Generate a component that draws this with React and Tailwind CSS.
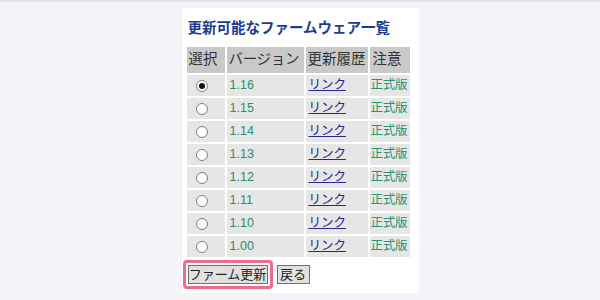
import React from 'react'

const versions = ['1.16', '1.15', '1.14', '1.13', '1.12', '1.11', '1.10', '1.00']

function Radio({ checked }) {
  return (
    <span className="flex w-[12px] h-[12px] rounded-full border border-[#808080] bg-white items-center justify-center">
      {checked && <span className="w-[6px] h-[6px] rounded-full bg-[#111]" />}
    </span>
  )
}

export default function App() {
  return (
    <div
      className="w-[600px] h-[300px] bg-[#f2f4f8] border-t-2 border-[#e3e6ec] overflow-hidden"
      style={{ fontFamily: '"Liberation Sans", "Noto Sans CJK JP", sans-serif' }}
    >
      <div className="mx-auto mt-[6px] w-[237px] h-[285px] bg-white pt-[10px]">
        <h1 className="h-[20px] leading-[20px] pl-[6px] text-[14.5px] font-bold text-[#1d3d8f]">
          更新可能なファームウェア一覧
        </h1>

        <table className="mt-[7px] ml-[3px] w-[227px] border-separate border-spacing-[2px] table-fixed text-[12.5px]">
          <colgroup>
            <col className="w-[38px]" />
            <col className="w-[77px]" />
            <col className="w-[62px]" />
            <col className="w-[40px]" />
          </colgroup>
          <thead>
            <tr className="h-[26px] bg-[#c9c9c9] text-[#333] text-[14.5px]">
              <th className="font-normal text-left pl-[2px] p-0 whitespace-nowrap">選択</th>
              <th className="font-normal text-left pl-[2px] whitespace-nowrap tracking-[-0.3px]">バージョン</th>
              <th className="font-normal text-left pl-[2px] whitespace-nowrap">更新履歴</th>
              <th className="font-normal text-left pl-[3px] whitespace-nowrap">注意</th>
            </tr>
          </thead>
          <tbody>
            {versions.map((v, i) => (
              <tr key={v} className="h-[21px] bg-[#e6e6e6]">
                <td className="p-0 pl-[9px]">
                  <Radio checked={i === 0} />
                </td>
                <td className="pl-[3px] text-[#2e8c6c]">{v}</td>
                <td className="pl-[3px]">
                  <a href="#" className="text-[#28288a] underline">リンク</a>
                </td>
                <td className="pl-[1px] text-[#2a9474] whitespace-nowrap tracking-[-0.2px]">正式版</td>
              </tr>
            ))}
          </tbody>
        </table>

        <div className="mt-[1px] ml-[1px] flex items-center">
          <div className="border-[3px] border-[#f06a8a] rounded-[4px] px-[2px] py-[2px] flex">
            <button className="w-[80px] h-[19px] bg-[#e1e1e1] border border-[#707070] text-[13px] leading-none text-[#222]">
              ファーム更新
            </button>
          </div>
          <button className="ml-[4px] w-[33px] h-[19px] bg-[#e1e1e1] border border-[#707070] text-[13px] leading-none text-[#222]">
            戻る
          </button>
        </div>
      </div>
    </div>
  )
}
